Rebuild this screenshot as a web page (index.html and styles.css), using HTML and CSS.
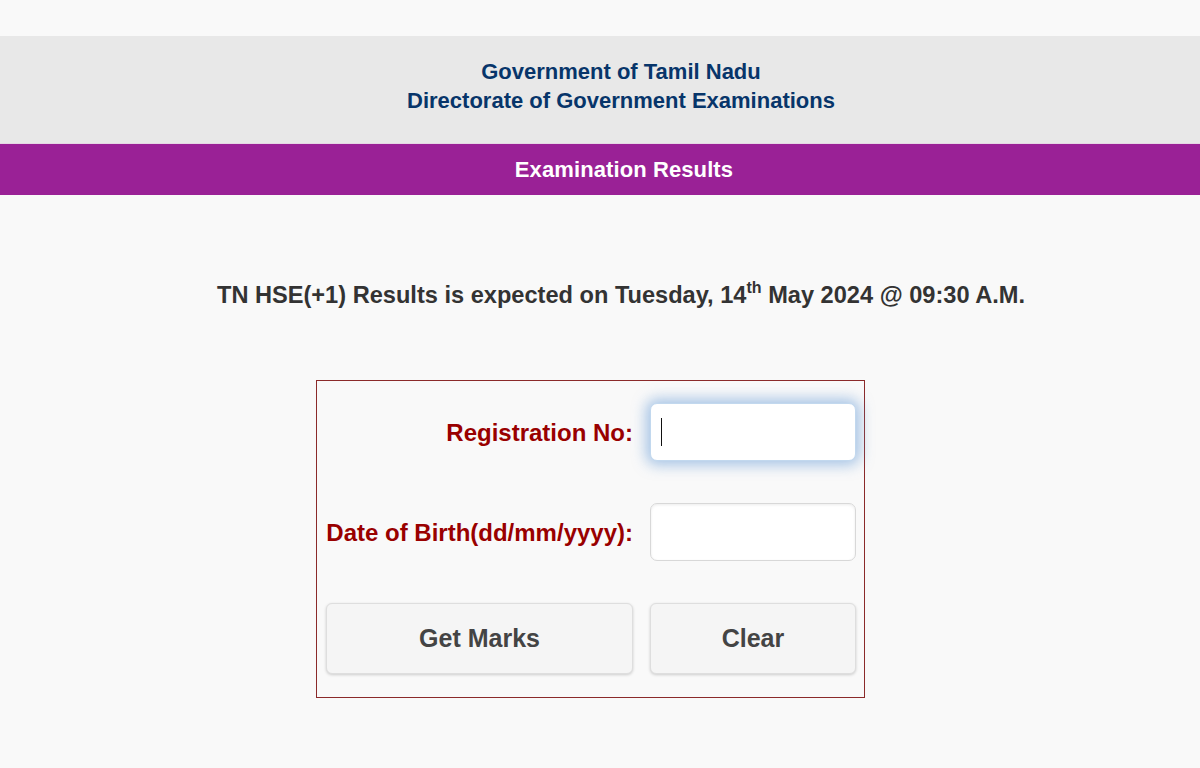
FILE: index.html
```html
<!DOCTYPE html>
<html lang="en">
<head>
<meta charset="utf-8">
<title>Examination Results</title>
<link rel="stylesheet" href="styles.css">
</head>
<body>
<div class="page">
  <header class="gov-header">
    <div class="gov-line">Government of Tamil Nadu</div>
    <div class="gov-line">Directorate of Government Examinations</div>
  </header>
  <div class="title-bar">Examination Results</div>
  <p class="notice">TN HSE(+1) Results is expected on Tuesday, 14<sup>th</sup> May 2024 @ 09:30 A.M.</p>
  <form class="result-form">
    <label class="form-label" for="reg">Registration No:</label>
    <div class="field field-focus"><input id="reg" class="text-input focused" type="text"></div>
    <label class="form-label" for="dob">Date of Birth(dd/mm/yyyy):</label>
    <div class="field"><input id="dob" class="text-input" type="text"></div>
    <button type="button" class="btn">Get Marks</button>
    <button type="reset" class="btn">Clear</button>
  </form>
</div>
</body>
</html>
```
FILE: styles.css
```css
html, body {
  margin: 0;
  padding: 0;
  background: #f9f9f9;
  font-family: "Liberation Sans", Arial, sans-serif;
}
.page {
  padding-top: 36px;
}
.gov-header {
  background: #e8e8e8;
  padding: 21px 0 28px 42px;
  text-align: center;
  border-bottom: 1px solid #e6d6e4;
}
.gov-line {
  font-size: 22px;
  line-height: 29px;
  font-weight: bold;
  color: #07356a;
}
.title-bar {
  background: #9a2196;
  color: #ffffff;
  text-align: center;
  font-size: 22px;
  font-weight: bold;
  height: 51px;
  line-height: 52px;
  padding-left: 48px;
  letter-spacing: 0.1px;
}
.notice {
  margin: 84px 0 0;
  padding-left: 42px;
  text-align: center;
  font-size: 23.6px;
  line-height: 32px;
  font-weight: bold;
  color: #333333;
}
.notice sup {
  font-size: 16px;
  line-height: 0;
  vertical-align: 10px;
}
.result-form {
  width: 530px;
  margin: 69px 0 0 calc(50% - 284px);
  border: 1px solid #8b2a2a;
  padding: 22px 8px 23px 9px;
  display: grid;
  grid-template-columns: 307px 206px;
  column-gap: 17px;
  row-gap: 42px;
  align-items: center;
}
.form-label {
  text-align: right;
  font-size: 24px;
  font-weight: bold;
  color: #990000;
  padding-top: 2px;
}
.field {
  position: relative;
  height: 58px;
}
.text-input {
  box-sizing: border-box;
  width: 206px;
  height: 58px;
  border: 1px solid #d8d8d8;
  border-radius: 7px;
  background: #ffffff;
  box-shadow: inset 0 1px 3px rgba(0,0,0,0.08);
  outline: none;
  font-size: 20px;
  padding: 0 10px;
  font-family: "Liberation Sans", Arial, sans-serif;
}
.text-input.focused {
  border-color: #c2d8ee;
  box-shadow: 0 0 14px 4px rgba(96,152,214,0.55);
}
.field-focus::after {
  content: "";
  position: absolute;
  left: 11px;
  top: 15px;
  width: 1px;
  height: 28px;
  background: #111111;
}
.btn {
  height: 71px;
  border: 1px solid #dedede;
  border-radius: 6px;
  background: #f5f5f5;
  box-shadow: 0 1px 3px rgba(0,0,0,0.18);
  font-family: "Liberation Sans", Arial, sans-serif;
  font-size: 25px;
  font-weight: bold;
  color: #444444;
  cursor: pointer;
}
```
